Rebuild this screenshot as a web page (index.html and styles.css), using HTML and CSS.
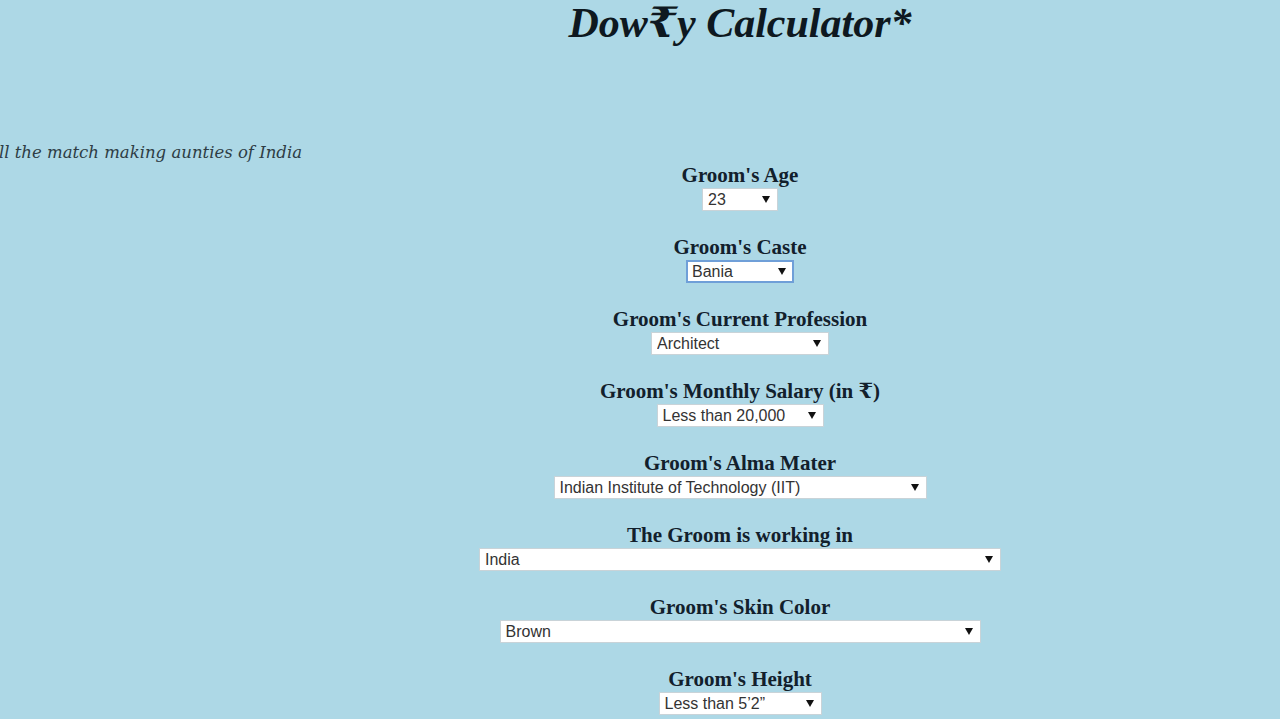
FILE: index.html
```html
<!DOCTYPE html>
<html lang="en">
<head>
    <meta charset="UTF-8" />
    <meta name="viewport" content="width=device-width, initial-scale=1.0"/>
    <title>Dowry Calculator</title>
    <link rel="stylesheet" href="styles.css">
</head>
<body>

<h1 class="title">Dow₹y Calculator*</h1>

<p class="tagline"><span>Dedicated to all the match making aunties of India</span></p>

<form class="calc" id="dowryForm">
    <div class="field">
        <label for="age">Groom's Age</label>
        <span class="pick w-age">
            <select id="age" name="age">
                <option>23</option>
                <option>24</option>
                <option>25</option>
            </select>
            <i class="arrow"></i>
        </span>
    </div>

    <div class="field">
        <label for="caste">Groom's Caste</label>
        <span class="pick w-caste focused">
            <select id="caste" name="caste">
                <option>Bania</option>
                <option>Brahmin</option>
            </select>
            <i class="arrow"></i>
        </span>
    </div>

    <div class="field">
        <label for="profession">Groom's Current Profession</label>
        <span class="pick w-prof">
            <select id="profession" name="profession">
                <option>Architect</option>
                <option>Doctor</option>
            </select>
            <i class="arrow"></i>
        </span>
    </div>

    <div class="field">
        <label for="salary">Groom's Monthly Salary (in ₹)</label>
        <span class="pick w-salary">
            <select id="salary" name="salary">
                <option>Less than 20,000</option>
            </select>
            <i class="arrow"></i>
        </span>
    </div>

    <div class="field">
        <label for="alma">Groom's Alma Mater</label>
        <span class="pick w-alma">
            <select id="alma" name="alma">
                <option>Indian Institute of Technology (IIT)</option>
            </select>
            <i class="arrow"></i>
        </span>
    </div>

    <div class="field">
        <label for="country">The Groom is working in</label>
        <span class="pick w-country">
            <select id="country" name="country">
                <option>India</option>
            </select>
            <i class="arrow"></i>
        </span>
    </div>

    <div class="field">
        <label for="skin">Groom's Skin Color</label>
        <span class="pick w-skin">
            <select id="skin" name="skin">
                <option>Brown</option>
            </select>
            <i class="arrow"></i>
        </span>
    </div>

    <div class="field">
        <label for="height">Groom's Height</label>
        <span class="pick w-height">
            <select id="height" name="height">
                <option>Less than 5’2”</option>
            </select>
            <i class="arrow"></i>
        </span>
    </div>
</form>

</body>
</html>
```

FILE: styles.css
```css
html, body { overflow: hidden; }
body {
    margin: 0;
    background: #add8e6;
    font-family: "Liberation Serif", "DejaVu Serif", serif;
    color: #12202c;
}

.title {
    margin: 0;
    padding: 2px 0 0 200px;
    text-align: center;
    font-size: 42px;
    line-height: 42px;
    font-weight: bold;
    font-style: italic;
    color: #0e1820;
}

.tagline {
    display: flex;
    justify-content: flex-end;
    width: 302px;
    margin: 99px 0 0;
    line-height: 20px;
    font-style: italic;
    font-family: "DejaVu Serif", serif;
    font-size: 16.5px;
    color: #2e3d45;
    white-space: nowrap;
}

.calc {
    padding-left: 200px;
    text-align: center;
}
.field { margin-bottom: 24px; }
.field label {
    display: block;
    font-size: 21px;
    line-height: 25px;
    font-weight: bold;
}

.pick {
    position: relative;
    display: inline-block;
    vertical-align: top;
}
.pick select {
    appearance: none;
    -webkit-appearance: none;
    width: 100%;
    height: 23px;
    margin: 0;
    padding: 0 20px 0 5px;
    border: 1px solid #c9d3d8;
    border-radius: 0;
    background: #fff;
    font-family: "Liberation Sans", Arial, sans-serif;
    font-size: 16px;
    color: #333;
    outline: none;
}
.pick.focused select { border: 2px solid #6f9fd8; padding-left: 4px; }
.pick .arrow {
    position: absolute;
    right: 8px;
    top: 8px;
    width: 0;
    height: 0;
    border-left: 4px solid transparent;
    border-right: 4px solid transparent;
    border-top: 7px solid #111;
    pointer-events: none;
}

.w-age     { width: 76px; }
.w-caste   { width: 108px; }
.w-prof    { width: 178px; }
.w-salary  { width: 167px; }
.w-alma    { width: 373px; }
.w-country { width: 522px; }
.w-skin    { width: 481px; }
.w-height  { width: 163px; }
```
